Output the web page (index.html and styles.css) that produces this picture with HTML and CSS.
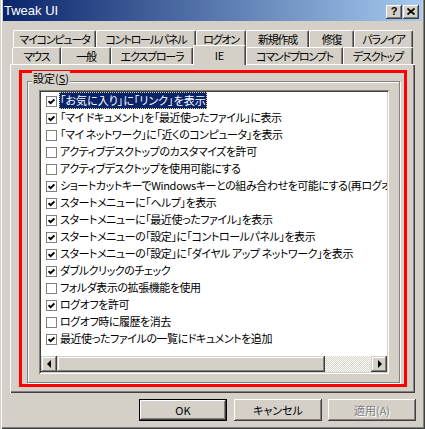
FILE: index.html
```html
<!DOCTYPE html>
<html lang="ja">
<head>
<meta charset="utf-8">
<title>Tweak UI</title>
<link rel="stylesheet" href="styles.css">
</head>
<body>
<div class="window">
  <div class="titlebar">
    <span class="title">Tweak UI</span>
    <div class="tbtns">
      <span class="tbtn help">?</span>
      <span class="tbtn"><svg width="8" height="7" viewBox="0 0 8 7"><path d="M0.5 0.5 L7.5 6.5 M7.5 0.5 L0.5 6.5" stroke="#000" stroke-width="1.7" fill="none"/></svg></span>
    </div>
  </div>
  <div class="tabs">
    <div class="tabrow r1">
      <div class="tab w83">マイコンピュータ</div>
      <div class="tab w100">コントロールパネル</div>
      <div class="tab w50">ログオン</div>
      <div class="tab w63">新規作成</div>
      <div class="tab w45">修復</div>
      <div class="tab w59">パラノイア</div>
    </div>
    <div class="tabrow r2">
      <div class="tab w49">マウス</div>
      <div class="tab w50">一般</div>
      <div class="tab w82">エクスプローラ</div>
      <div class="tab w53 sel">IE</div>
      <div class="tab w97">コマンドプロンプト</div>
      <div class="tab w70">デスクトップ</div>
    </div>
  </div>
  <div class="panel">
    <div class="redbox">
      <div class="group">
        <span class="legend">設定(<u>S</u>)</span>
        <div class="listview">
          <ul class="items">
            <li class="item"><span class="cb on"></span><span class="label selected">「お気に入り」に「リンク」を表示</span></li>
            <li class="item"><span class="cb on"></span><span class="label">「マイ ドキュメント」を「最近使ったファイル」に表示</span></li>
            <li class="item"><span class="cb"></span><span class="label">「マイ ネットワーク」に「近くのコンピュータ」を表示</span></li>
            <li class="item"><span class="cb"></span><span class="label">アクティブデスクトップのカスタマイズを許可</span></li>
            <li class="item"><span class="cb"></span><span class="label">アクティブデスクトップを使用可能にする</span></li>
            <li class="item"><span class="cb on"></span><span class="label">ショートカットキーで<span class="latin">Windows</span>キーとの組み合わせを可能にする(再ログオ</span></li>
            <li class="item"><span class="cb on"></span><span class="label">スタートメニューに「ヘルプ」を表示</span></li>
            <li class="item"><span class="cb on"></span><span class="label">スタートメニューに「最近使ったファイル」を表示</span></li>
            <li class="item"><span class="cb on"></span><span class="label">スタートメニューの「設定」に「コントロールパネル」を表示</span></li>
            <li class="item"><span class="cb on"></span><span class="label">スタートメニューの「設定」に「ダイヤル アップ ネットワーク」を表示</span></li>
            <li class="item"><span class="cb on"></span><span class="label">ダブルクリックのチェック</span></li>
            <li class="item"><span class="cb"></span><span class="label">フォルダ表示の拡張機能を使用</span></li>
            <li class="item"><span class="cb on"></span><span class="label">ログオフを許可</span></li>
            <li class="item"><span class="cb"></span><span class="label">ログオフ時に履歴を消去</span></li>
            <li class="item"><span class="cb on"></span><span class="label">最近使ったファイルの一覧にドキュメントを追加</span></li>
          </ul>
          <div class="hscroll">
            <span class="sbtn"><span class="arrow left"></span></span>
            <span class="thumb"></span>
            <span class="track"></span>
            <span class="sbtn"><span class="arrow right"></span></span>
          </div>
        </div>
      </div>
    </div>
  </div>
  <div class="buttons">
    <span class="btn default">OK</span>
    <span class="btn">キャンセル</span>
    <span class="btn disabled">適用(A)</span>
  </div>
</div>
</body>
</html>
```
FILE: styles.css
```css
* { box-sizing: border-box; }

body {
  margin: 0;
  background: #D4D0C8;
  font-family: "Noto Sans CJK JP", "Noto Sans", sans-serif;
  font-size: 11px;
  font-feature-settings: "palt";
  color: #000;
}

.window {
  width: 425px;
  height: 429px;
  background: #D4D0C8;
  display: flex;
  flex-direction: column;
  box-shadow: inset 1px 0 #D4D0C8, inset 2px 0 #fff, inset -1px -1px #404040, inset -2px -2px #808080;
}

.titlebar {
  margin: 0 3px;
  height: 21px;
  flex: none;
  background: linear-gradient(to right, #0A246A, #A6CAF0);
  display: flex;
  justify-content: space-between;
  align-items: flex-start;
  color: #fff;
}

.title {
  font-family: "Liberation Sans", sans-serif;
  font-size: 13px;
  line-height: 14px;
  padding: 4px 0 0 1px;
}

.tbtns {
  display: flex;
  gap: 1px;
  margin: 5px 3px 0 0;
}

.tbtn {
  width: 16px;
  height: 14px;
  background: #D4D0C8;
  box-shadow: inset -1px -1px #404040, inset 1px 1px #fff, inset -2px -2px #808080;
  display: flex;
  align-items: center;
  justify-content: center;
  color: #000;
  padding-bottom: 1px;
}

.tbtn.help {
  font-family: "Liberation Sans", sans-serif;
  font-weight: bold;
  font-size: 11px;
  line-height: 11px;
}

.tabs {
  padding-top: 9px;
  flex: none;
}

.tabrow {
  display: flex;
  align-items: flex-start;
  height: 17px;
}

.r1 { margin-left: 13px; }
.r2 { margin-left: 12px; }

.tab {
  height: 17px;
  flex: none;
  border-top: 1px solid #fff;
  border-left: 1px solid #fff;
  border-right: 1px solid #404040;
  box-shadow: inset -1px 0 #808080;
  border-radius: 2px 2px 0 0;
  line-height: 16px;
  text-align: center;
  white-space: nowrap;
  letter-spacing: -1.2px;
  background: #D4D0C8;
}

.tab.sel {
  height: 20px;
  margin-top: -2px;
  position: relative;
  z-index: 1;
  line-height: 14px;
  padding-top: 2px;
  letter-spacing: 0;
}

.w45 { width: 45px; }
.w49 { width: 49px; }
.w50 { width: 50px; }
.w53 { width: 53px; }
.w59 { width: 59px; }
.w63 { width: 63px; }
.w70 { width: 70px; }
.w82 { width: 82px; }
.w83 { width: 83px; }
.w97 { width: 97px; }
.w100 { width: 100px; }

.panel {
  margin-left: 10px;
  width: 405px;
  height: 329px;
  flex: none;
  padding: 6px 0 0 9px;
  box-shadow: inset 1px 1px #fff, inset -1px -1px #404040, inset -2px -2px #808080;
}

.redbox {
  width: 388px;
  height: 317px;
  border: 3px solid #FF0000;
}

.group {
  margin: 8px 0 0 5px;
  width: 373px;
  height: 302px;
  border: 1px solid #808080;
  box-shadow: inset 1px 1px #fff, 1px 1px #fff;
  position: relative;
}

.legend {
  position: absolute;
  left: 4px;
  top: -11px;
  padding: 0 1px;
  line-height: 14px;
  background: #D4D0C8;
}

.legend u { text-underline-offset: 1px; }

.listview {
  margin: 8px 0 0 11px;
  width: 350px;
  height: 284px;
  padding: 2px;
  background: #fff;
  display: flex;
  flex-direction: column;
  box-shadow: inset 1px 1px #808080, inset -1px -1px #fff, inset 2px 2px #404040, inset -2px -2px #D4D0C8;
}

.items {
  list-style: none;
  margin: 0;
  padding: 0;
  flex: 1;
  overflow: hidden;
}

.item {
  height: 17px;
  display: flex;
  align-items: flex-start;
  white-space: nowrap;
}

.cb {
  flex: none;
  width: 11px;
  height: 11px;
  margin: 4px 2px 0 5px;
  border: 1px solid #808080;
  background: #fff;
  position: relative;
}

.cb.on::after {
  content: "";
  position: absolute;
  left: 1px;
  top: 1px;
  width: 7px;
  height: 7px;
  background: url("data:image/svg+xml;utf8,<svg xmlns='http://www.w3.org/2000/svg' width='7' height='7' viewBox='0 0 7 7'><path d='M0.6 3.2 L2.6 5.2 L6.4 1.4' stroke='black' stroke-width='1.9' fill='none'/></svg>") no-repeat;
}

.label {
  line-height: 17px;
  height: 17px;
  padding: 0 1px;
  letter-spacing: -0.45px;
}

.latin { letter-spacing: -0.3px; }

.label.selected {
  background: #0A246A;
  color: #fff;
  outline: 1px dotted #E8D88A;
  outline-offset: -1px;
  letter-spacing: 0;
}

.hscroll {
  flex: none;
  height: 16px;
  display: flex;
}

.sbtn {
  flex: none;
  width: 16px;
  height: 16px;
  background: #D4D0C8;
  box-shadow: inset -1px -1px #404040, inset 1px 1px #D4D0C8, inset -2px -2px #808080, inset 2px 2px #fff;
  display: flex;
  align-items: center;
  justify-content: center;
}

.arrow {
  width: 0;
  height: 0;
  border-top: 4px solid transparent;
  border-bottom: 4px solid transparent;
}

.arrow.left { border-right: 4px solid #000; margin-right: 1px; }
.arrow.right { border-left: 4px solid #000; margin-left: 1px; }

.thumb {
  flex: none;
  width: 268px;
  height: 16px;
  background: #D4D0C8;
  box-shadow: inset -1px -1px #404040, inset 1px 1px #D4D0C8, inset -2px -2px #808080, inset 2px 2px #fff;
}

.track {
  flex: 1;
  background: repeating-conic-gradient(#fff 0 25%, #D4D0C8 0 50%) 0 0 / 2px 2px;
}

.buttons {
  display: flex;
  justify-content: flex-end;
  gap: 6px;
  margin-top: 6px;
  padding-right: 9px;
}

.btn {
  width: 88px;
  height: 22px;
  display: flex;
  align-items: center;
  justify-content: center;
  background: #D4D0C8;
  box-shadow: inset -1px -1px #404040, inset 1px 1px #fff, inset -2px -2px #808080;
}

.btn.default {
  margin-right: 1px;
  border: 1px solid #000;
}

.btn.disabled {
  color: #808080;
  text-shadow: 1px 1px #fff;
}
```
